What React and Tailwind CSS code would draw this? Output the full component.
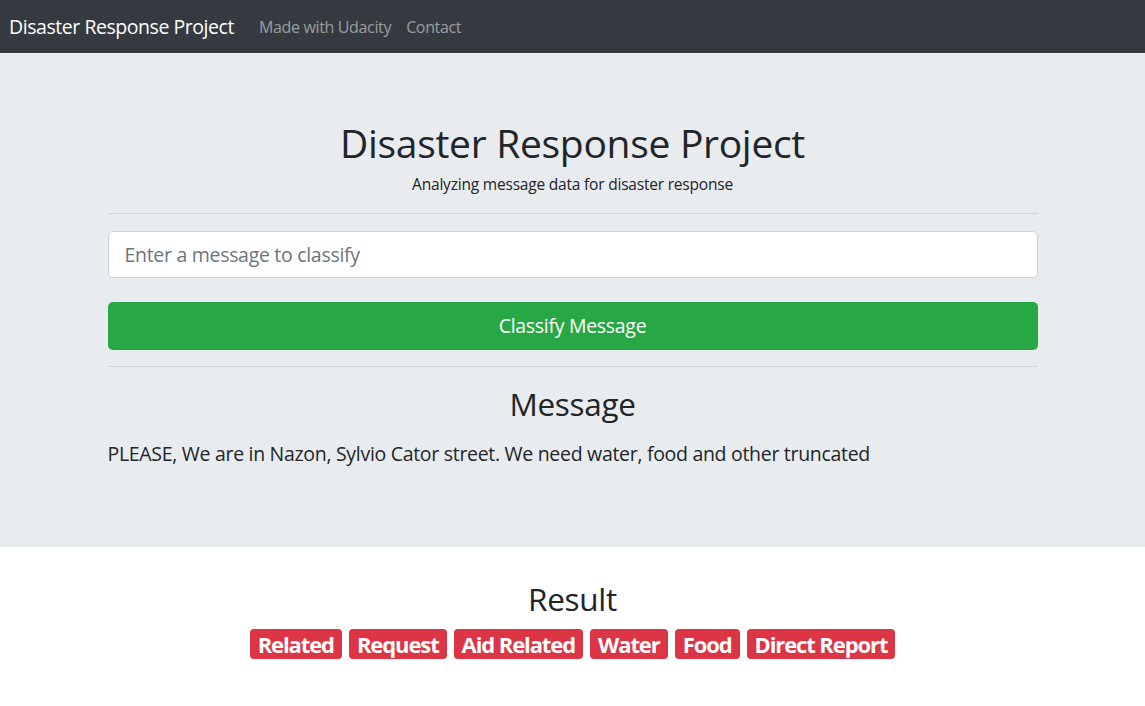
const LABELS = ["Related", "Request", "Aid Related", "Water", "Food", "Direct Report"];

export default function App() {
  return (
    <div className="min-h-screen bg-white text-[#212529]" style={{ fontFamily: "'Open Sans', 'Noto Sans', sans-serif" }}>
      <nav className="flex h-[53px] items-center bg-[#343a40] pl-[9px]">
        <span className="text-[19.5px] tracking-[-0.45px] text-white">Disaster Response Project</span>
        <div className="ml-[25px] flex gap-[15px] text-[16px] tracking-[-0.35px] text-white/50">
          <span>Made with Udacity</span>
          <span>Contact</span>
        </div>
      </nav>

      <section className="bg-[#e9ecef] pt-[66px] pb-[78px]">
        <div className="mx-auto w-[930px]">
          <h1 className="text-center text-[39px] leading-[48px] font-medium tracking-[-0.3px]">Disaster Response Project</h1>
          <p className="mt-[6px] text-center text-[15.5px] leading-[22px] tracking-[-0.2px]">Analyzing message data for disaster response</p>
          <hr className="mt-[18px] border-black/10" />
          <div className="mt-[17px] flex h-[47px] items-center rounded-[5px] border border-[#ced4da] bg-white px-[16px] text-[19.5px] tracking-[-0.3px] text-[#6c757d]">
            Enter a message to classify
          </div>
          <button className="mt-[24px] flex h-[48px] w-full items-center justify-center rounded-[5px] bg-[#28a745] text-[19.5px] tracking-[-0.3px] text-white">
            Classify Message
          </button>
          <hr className="mt-[16px] border-black/10" />
          <h2 className="mt-[18px] text-center text-[31.5px] leading-[38px] font-medium tracking-[-0.3px]">Message</h2>
          <p className="mt-[16px] text-[19.5px] leading-[30px] tracking-[-0.3px]">
            PLEASE, We are in Nazon, Sylvio Cator street. We need water, food and other truncated
          </p>
        </div>
      </section>

      <section className="pt-[33px]">
        <h2 className="text-center text-[31.5px] leading-[38px] font-medium tracking-[-0.3px]">Result</h2>
        <div className="mt-[11px] flex justify-center gap-[7px]">
          {LABELS.map((label) => (
            <span
              key={label}
              className="flex h-[30px] items-center rounded-[4px] bg-[#dc3545] px-[8px] text-[22px] font-bold tracking-[-1.1px] text-white"
            >
              {label}
            </span>
          ))}
        </div>
      </section>
    </div>
  );
}
